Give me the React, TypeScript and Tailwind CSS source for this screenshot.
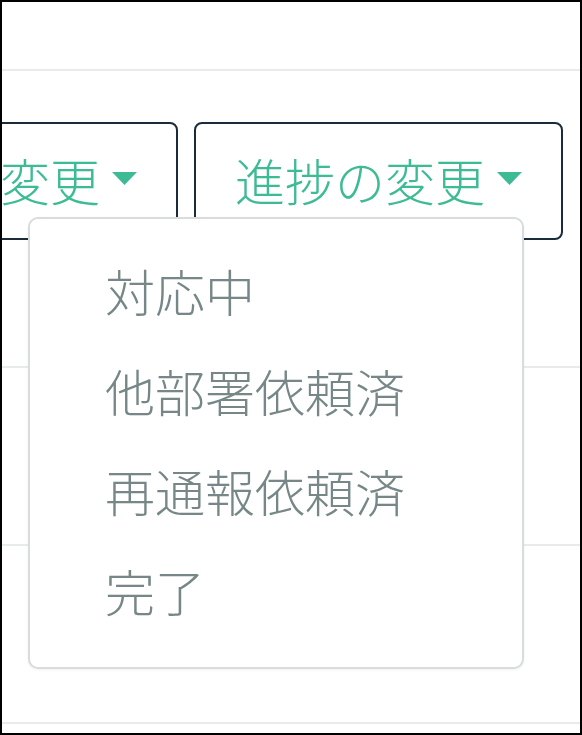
const FONT = { fontFamily: '"Noto Sans CJK JP", "Noto Sans", sans-serif' };

const STATUSES = ["対応中", "他部署依頼済", "再通報依頼済", "完了"];

function Caret() {
  return (
    <svg width="25" height="13" viewBox="0 0 25 13" className="shrink-0">
      <polygon points="0,0 25,0 12.5,13" fill="#3dbb95" />
    </svg>
  );
}

function DropButton({ label }: { label: string }) {
  return (
    <button className="shrink-0 h-[118px] flex items-center gap-[12px] pl-[39px] pr-[39px] pb-[5px] border-2 border-[#1c2b3a] rounded-[8px] bg-white text-[#3dbb95] text-[50px] font-light leading-none whitespace-nowrap">
      <span>{label}</span>
      <Caret />
    </button>
  );
}

export default function App() {
  return (
    <div
      className="relative w-[582px] h-[735px] border-2 border-black bg-white overflow-hidden"
      style={FONT}
    >
      {/* ROWS */}
      <div className="h-[69px] border-b-2 border-[#e8ebeb]" />

      <div className="h-[297px] border-b-2 border-[#e8ebeb] pt-[51px] pr-[17px] flex justify-end items-start gap-[16px] overflow-hidden">
        <DropButton label="担当者の変更" />
        <DropButton label="進捗の変更" />
      </div>

      <div className="h-[178px] border-b-2 border-[#e8ebeb]" />
      <div className="h-[178px] border-b-2 border-[#e8ebeb]" />

      {/* DROPDOWN MENU */}
      <div className="absolute top-[215px] left-[26px] w-[496px] bg-white border-2 border-[#d9dcdc] rounded-[10px] pt-[21px] pb-[27px] shadow-[0_1px_3px_rgba(0,0,0,0.06)]">
        {STATUSES.map((s) => (
          <div
            key={s}
            className="h-[100px] flex items-center pl-[75px] text-[50px] font-light leading-none text-[#778787]"
          >
            {s}
          </div>
        ))}
      </div>
    </div>
  );
}
